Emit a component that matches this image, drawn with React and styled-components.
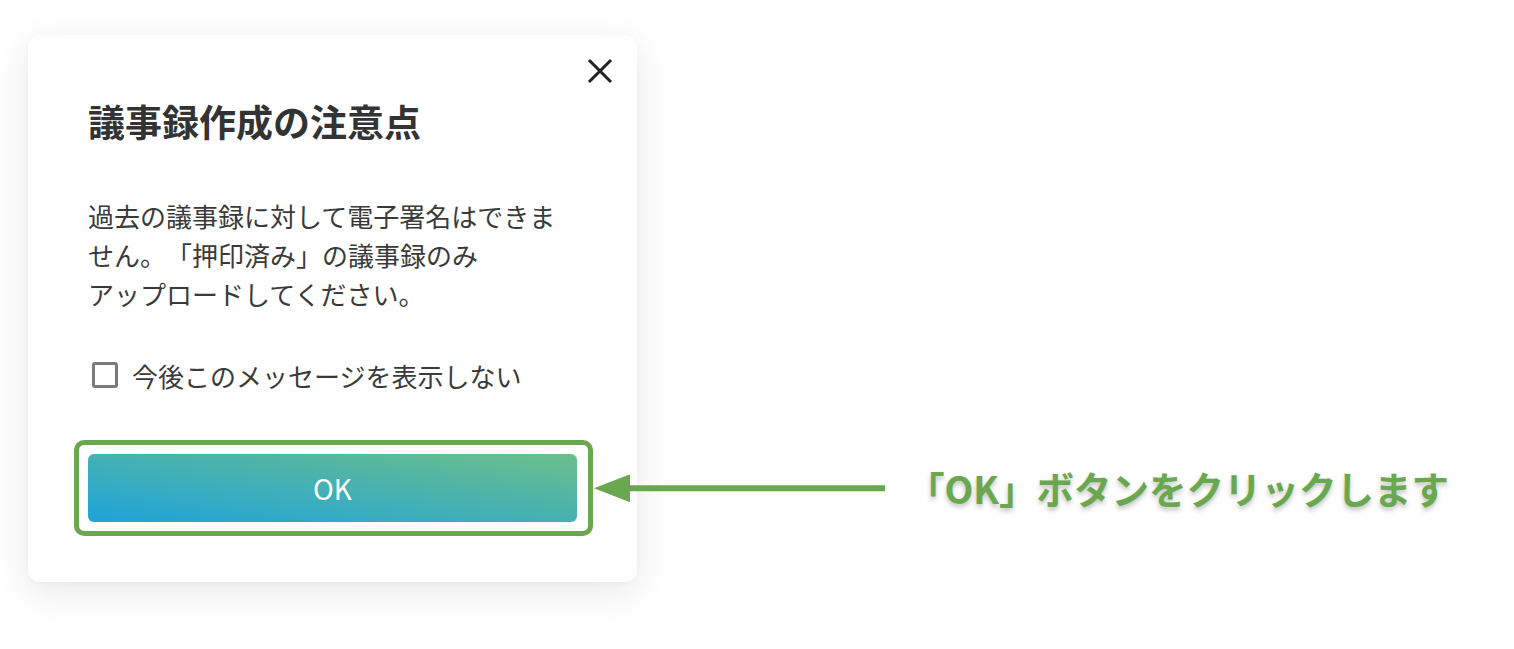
import React from 'react'
import styled, { createGlobalStyle } from 'styled-components'

const GlobalStyle = createGlobalStyle`
  html, body {
    margin: 0;
    padding: 0;
    background: #ffffff;
  }
  body {
    font-family: "Noto Sans CJK JP", "Noto Sans", sans-serif;
    color: #333333;
    text-spacing-trim: space-all;
  }
`

const Page = styled.div`
  display: flex;
  align-items: flex-start;
  padding: 35px 0 0 28px;
  min-height: 649px;
  box-sizing: border-box;
`

const Card = styled.div`
  width: 609px;
  box-sizing: border-box;
  padding: 23px 24px 60px 60px;
  background: #ffffff;
  border-radius: 12px;
  box-shadow: 0 10px 36px rgba(0, 0, 0, 0.09), 0 2px 6px rgba(0, 0, 0, 0.03);
  display: flex;
  flex-direction: column;
`

const Header = styled.div`
  display: flex;
  justify-content: flex-end;
  height: 26px;
`

const CloseButton = styled.button`
  width: 26px;
  height: 26px;
  padding: 0;
  border: none;
  background: none;
  cursor: pointer;
  color: #222222;
  display: flex;

  svg {
    width: 26px;
    height: 26px;
  }
`

const Content = styled.div`
  padding-right: 36px;
  display: flex;
  flex-direction: column;
`

const Title = styled.h2`
  margin: 11.5px 0 0;
  font-size: 37px;
  line-height: 50px;
  font-weight: 700;
  color: #333333;
`

const Message = styled.p`
  margin: 50px 0 0;
  font-size: 26px;
  line-height: 39px;
  font-weight: 400;
  color: #3a3a3a;
`

const CheckRow = styled.label`
  margin-top: 43px;
  display: flex;
  align-items: center;
  gap: 14px;
  height: 39px;
  padding-left: 4px;
  font-size: 26px;
  color: #3a3a3a;
  cursor: pointer;
`

const CheckBox = styled.span`
  width: 26px;
  height: 26px;
  box-sizing: border-box;
  border: 3px solid #7a7a7a;
  border-radius: 3px;
  flex-shrink: 0;
`

const ButtonWrap = styled.div`
  position: relative;
  margin-top: 59.5px;
`

const OkButton = styled.button`
  width: 100%;
  height: 68px;
  border: none;
  border-radius: 6px;
  background: linear-gradient(to top right, #1ea3dc, #6cbf8a);
  color: #ffffff;
  font-family: "Noto Sans CJK JP", "Noto Sans", sans-serif;
  font-size: 28px;
  font-weight: 400;
  cursor: pointer;
`

const Highlight = styled.div`
  position: absolute;
  inset: -14px -16px -14px -14px;
  border: 5px solid #6aa84f;
  border-radius: 10px;
  pointer-events: none;
`

const Callout = styled.div`
  position: absolute;
  left: calc(100% + 6px);
  top: 50%;
  transform: translateY(-50%);
  display: flex;
  align-items: center;
  gap: 22px;
  white-space: nowrap;
`

const Arrow = styled.svg`
  width: 291px;
  height: 28px;
  display: block;
`

const CalloutText = styled.span`
  font-size: 37.5px;
  font-weight: 700;
  line-height: 1;
  color: #6aa84f;
  text-shadow: 0 3px 5px rgba(0, 0, 0, 0.25);
`

export default function App() {
  return (
    <>
      <GlobalStyle />
      <Page>
        <Card>
          <Header>
            <CloseButton aria-label="閉じる">
              <svg viewBox="0 0 26 26" fill="none" stroke="currentColor" strokeWidth="3" strokeLinecap="square">
                <path d="M3 3 L23 23 M23 3 L3 23" />
              </svg>
            </CloseButton>
          </Header>
          <Content>
            <Title>議事録作成の注意点</Title>
            <Message>
              過去の議事録に対して電子署名はできません。「押印済み」の議事録のみ
              <br />
              アップロードしてください。
            </Message>
            <CheckRow>
              <CheckBox />
              今後このメッセージを表示しない
            </CheckRow>
            <ButtonWrap>
              <OkButton>OK</OkButton>
              <Highlight>
                <Callout>
                  <Arrow viewBox="0 0 291 28">
                    <polygon points="0,14 36,0 36,28" fill="#6aa84f" />
                    <rect x="35" y="11" width="256" height="6" fill="#6aa84f" />
                  </Arrow>
                  <CalloutText>「OK」ボタンをクリックします</CalloutText>
                </Callout>
              </Highlight>
            </ButtonWrap>
          </Content>
        </Card>
      </Page>
    </>
  )
}
